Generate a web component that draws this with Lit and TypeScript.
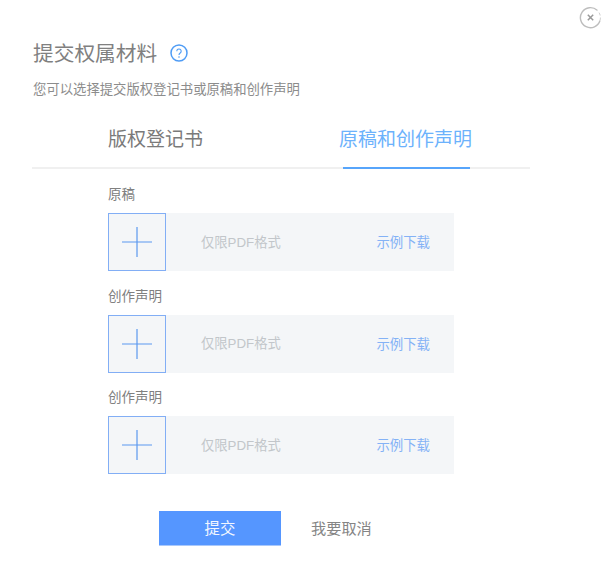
import { LitElement, html, css, svg } from "lit";
import { customElement } from "lit/decorators.js";

const plus = svg`<svg class="plus" width="30" height="30" viewBox="0 0 30 30" aria-hidden="true"><path d="M0 15H30M15 0V30" stroke="#5b98ef" stroke-width="1.2" fill="none"/></svg>`;

@customElement("app-root")
export class AppRoot extends LitElement {
  static styles = css`
    :host {
      display: block;
      position: relative;
      width: 604px;
      height: 573px;
      background: #fff;
      overflow: hidden;
      font-family: "Noto Sans CJK SC", "Liberation Sans", sans-serif;
      color: #666;
    }
    .close {
      position: absolute;
      left: 579px;
      top: 6px;
    }
    .page {
      display: flex;
      flex-direction: column;
      padding: 39px 74px 0 32px;
    }
    .title {
      display: flex;
      align-items: center;
      gap: 13px;
      height: 26px;
      padding-left: 1px;
      font-size: 20.7px;
      line-height: 26px;
      color: #808080;
    }
    .title svg {
      margin-top: 1px;
    }
    .sub {
      margin-top: 14px;
      padding-left: 1px;
      font-size: 13.35px;
      line-height: 20px;
      color: #8c8c8c;
    }
    .tabs {
      display: flex;
      height: 49px;
      margin-top: 19px;
      border-bottom: 2px solid #f0f0f0;
    }
    .tab {
      box-sizing: border-box;
      height: 51px;
      font-size: 19px;
      line-height: 39px;
      text-align: center;
      color: #7a7a7a;
    }
    .tab.first {
      width: 95px;
      margin-left: 76px;
    }
    .tab.active {
      width: 127px;
      margin-left: 140px;
      padding-right: 2px;
      color: #6cb2fc;
      border-bottom: 2px solid #57a5fb;
      white-space: nowrap;
      display: flex;
      justify-content: center;
    }
    .form {
      display: flex;
      flex-direction: column;
      width: 346px;
      margin-left: 76px;
      padding-top: 15px;
    }
    .label {
      height: 20px;
      font-size: 13.5px;
      line-height: 18px;
      color: #808080;
    }
    .row {
      display: flex;
      align-items: center;
      height: 58px;
      margin-top: 9px;
      margin-bottom: 14.5px;
      background: #f4f6f8;
    }
    .box {
      box-sizing: border-box;
      display: flex;
      align-items: center;
      justify-content: center;
      flex: none;
      width: 58px;
      height: 58px;
      background: #f4f6f8;
      border: 1px solid #82aef5;
    }
    .hint {
      flex: 1;
      margin-left: 35px;
      padding-bottom: 2px;
      font-family: "Liberation Sans", "Noto Sans CJK SC", sans-serif;
      font-size: 13.3px;
      color: #c2c6ca;
    }
    .link {
      margin-right: 24px;
      padding-bottom: 2px;
      font-size: 13.4px;
      color: #84b2f6;
    }
    .actions {
      display: flex;
      align-items: center;
      margin-left: 127px;
      margin-top: 22.5px;
    }
    .submit {
      width: 122px;
      height: 34px;
      padding: 0 0 2px;
      border: 0;
      border-bottom: 1px solid #a9c8fb;
      box-sizing: border-box;
      height: 35px;
      background: #5596ff;
      color: #f2f6ff;
      font: inherit;
      font-size: 15.4px;
      line-height: 32px;
    }
    .cancel {
      margin-left: 30px;
      padding-bottom: 3px;
      font-size: 15.2px;
      color: #858585;
    }
  `;

  private rowTpl(label: string) {
    return html`
      <div class="label">${label}</div>
      <div class="row">
        <div class="box">${plus}</div>
        <div class="hint">仅限PDF格式</div>
        <div class="link">示例下载</div>
      </div>
    `;
  }

  render() {
    return html`
      <svg class="close" width="23" height="23" viewBox="0 0 23 23" aria-hidden="true">
        <path d="M18.2 4.3A10 10 0 1 0 21 14.5" fill="none" stroke="#bdbdbd" stroke-width="1.4" />
        <path d="M21 14.5A10 10 0 0 0 18.2 4.3" fill="none" stroke="#d0d0d0" stroke-width="1" stroke-dasharray="3 2"/>
        <path d="M8.8 8.8L14.2 14.2M14.2 8.8L8.8 14.2" stroke="#999" stroke-width="1.5" fill="none" />
      </svg>
      <div class="page">
        <div class="title">
          <span>提交权属材料</span>
          <svg width="18" height="18" viewBox="0 0 18 18" aria-hidden="true">
            <circle cx="9" cy="9" r="8" fill="none" stroke="#4f9cf5" stroke-width="1.5" />
            <path d="M6.8 7.2A2.2 2.2 0 1 1 10.2 9C9.4 9.5 9 10 9 11" fill="none" stroke="#4f9cf5" stroke-width="1.1" />
            <circle cx="9" cy="13" r=".8" fill="#4f9cf5" />
          </svg>
        </div>
        <div class="sub">您可以选择提交版权登记书或原稿和创作声明</div>
        <div class="tabs">
          <div class="tab first">版权登记书</div>
          <div class="tab active">原稿和创作声明</div>
        </div>
        <div class="form">
          ${this.rowTpl("原稿")} ${this.rowTpl("创作声明")} ${this.rowTpl("创作声明")}
        </div>
        <div class="actions">
          <button class="submit">提交</button>
          <div class="cancel">我要取消</div>
        </div>
      </div>
    `;
  }
}
